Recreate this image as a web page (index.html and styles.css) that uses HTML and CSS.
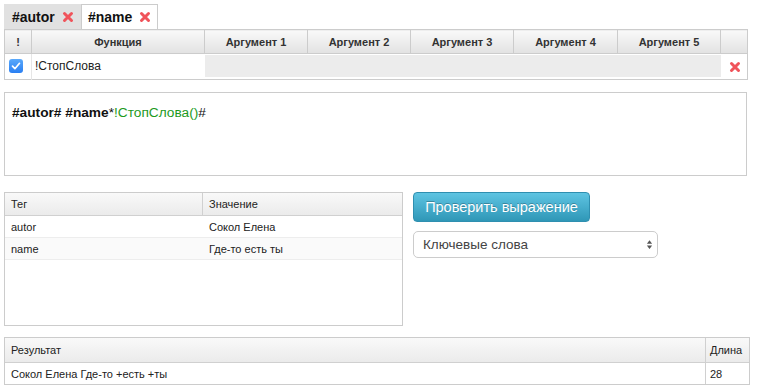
FILE: index.html
```html
<!DOCTYPE html>
<html lang="ru">
<head>
    <meta charset="UTF-8">
    <title>Проверка выражения</title>
    <link rel="stylesheet" href="styles.css">
</head>
<body>
    <!-- Tag tabs -->
    <div class="tabs">
        <div class="tab">#autor <span class="close"><svg viewBox="0 0 12 12"><path d="M2.5 2.5l7 7M9.5 2.5l-7 7"/></svg></span></div>
        <div class="tab active">#name <span class="close"><svg viewBox="0 0 12 12"><path d="M2.5 2.5l7 7M9.5 2.5l-7 7"/></svg></span></div>
    </div>

    <!-- Functions grid -->
    <table class="grid">
        <colgroup>
            <col style="width:27px"><col style="width:173px"><col style="width:103px"><col style="width:103px">
            <col style="width:103px"><col style="width:104px"><col style="width:103px"><col style="width:27px">
        </colgroup>
        <thead>
            <tr>
                <th>!</th><th>Функция</th><th>Аргумент 1</th><th>Аргумент 2</th>
                <th>Аргумент 3</th><th>Аргумент 4</th><th>Аргумент 5</th><th></th>
            </tr>
        </thead>
        <tbody>
            <tr>
                <td class="check-cell"><span class="checkbox"><svg viewBox="0 0 14 14"><path d="M3.5 7.2l2.4 2.5 4.6-5.4"/></svg></span></td>
                <td class="fn">!СтопСлова</td>
                <td colspan="5" class="args"><div class="args-fill"></div></td>
                <td class="del"><span class="close"><svg viewBox="0 0 12 12"><path d="M2.5 2.5l7 7M9.5 2.5l-7 7"/></svg></span></td>
            </tr>
        </tbody>
    </table>

    <!-- Expression -->
    <div class="editor"><b>#autor#</b> <b>#name</b>*<span class="green">!СтопСлова()</span>#</div>

    <div class="middle">
        <div class="tags">
            <div class="row head"><div class="c1">Тег</div><div class="c2">Значение</div></div>
            <div class="row"><div class="c1">autor</div><div class="c2">Сокол Елена</div></div>
            <div class="row alt"><div class="c1">name</div><div class="c2">Где-то есть ты</div></div>
        </div>
        <div class="actions">
            <button class="btn">Проверить выражение</button>
            <div class="select">
                <span>Ключевые слова</span>
                <svg class="arrows" viewBox="0 0 8 12"><path d="M4 1l3 4H1zM4 11l3-4H1z"/></svg>
            </div>
        </div>
    </div>

    <!-- Result -->
    <div class="result">
        <div class="row head"><div class="r1">Результат</div><div class="r2">Длина</div></div>
        <div class="row"><div class="r1">Сокол Елена Где-то +есть +ты</div><div class="r2">28</div></div>
    </div>
</body>
</html>
```

FILE: styles.css
```css
* {
    margin: 0;
    padding: 0;
    box-sizing: border-box;
}

body {
    font-family: 'Liberation Sans', Arial, sans-serif;
    color: #222;
    background: #fff;
    padding: 4px;
    width: 757px;
}

/* Tabs */
.tabs {
    display: flex;
    height: 25px;
}

.tab {
    display: flex;
    align-items: center;
    gap: 7px;
    height: 25px;
    padding: 0 8px 0 8px;
    font-size: 14px;
    font-weight: bold;
    color: #111;
    background: #e1e1e1;
    width: 77px;
}

.tab.active {
    background: #fff;
    border: 1px solid #ccc;
    border-bottom: none;
    width: 77px;
    padding-left: 6px;
}

.close {
    display: inline-block;
    width: 12px;
    height: 12px;
}

.close svg {
    width: 12px;
    height: 12px;
    display: block;
}

.close path {
    stroke: #f0545b;
    stroke-width: 3;
    stroke-linecap: round;
    fill: none;
}

/* Functions grid */
.grid {
    width: 743px;
    border-collapse: collapse;
    table-layout: fixed;
    border: 1px solid #ccc;
}

.grid th {
    height: 24px;
    font-size: 11px;
    font-weight: bold;
    color: #333;
    background: linear-gradient(#f9f9f9, #e2e2e2);
    border-left: 1px solid #ccc;
    border-bottom: 1px solid #ccc;
}

.grid th:first-child {
    border-left: none;
}

.grid td {
    height: 25px;
    font-size: 12px;
    padding: 1px 0 2px;
    vertical-align: middle;
}

.check-cell {
    text-align: center;
    border-right: 1px solid #e6e6e6;
}

.checkbox {
    display: inline-block;
    width: 14px;
    height: 14px;
    border-radius: 3px;
    background: linear-gradient(#5aa9fb, #2a7ff2);
    vertical-align: middle;
    margin-left: -4px;
}

.checkbox svg {
    display: block;
    width: 14px;
    height: 14px;
}

.checkbox path {
    stroke: #fff;
    stroke-width: 1.7;
    fill: none;
    stroke-linecap: round;
    stroke-linejoin: round;
}

.fn {
    padding-left: 3px !important;
    color: #222;
}

.args-fill {
    height: 22px;
    background: #ececec;
}

.del {
    text-align: center;
}

.del .close {
    vertical-align: middle;
    margin-left: 2px;
}

/* Expression editor */
.editor {
    margin-top: 12px;
    width: 743px;
    height: 84px;
    border: 1px solid #ccc;
    padding: 12px 7px;
    font-size: 13.7px;
    color: #111;
}

.green {
    color: #1d9a1d;
}

/* Middle block */
.middle {
    display: flex;
    margin-top: 16px;
}

.tags {
    width: 399px;
    height: 134px;
    border: 1px solid #ccc;
    font-size: 11px;
    color: #222;
}

.row {
    display: flex;
    height: 22px;
    align-items: center;
    border-bottom: 1px solid #ededed;
}

.row.alt {
    background: #fafafa;
}

.row.head {
    height: 23px;
    background: linear-gradient(#f9f9f9, #ebebeb);
    border-bottom: 1px solid #d0d0d0;
}

.c1 {
    width: 198px;
    padding-left: 6px;
    height: 100%;
    display: flex;
    align-items: center;
}

.head .c1 {
    border-right: 1px solid #d0d0d0;
}

.c2 {
    padding-left: 6px;
}

.actions {
    margin-left: 10px;
    display: flex;
    flex-direction: column;
    gap: 9px;
}

.btn {
    width: 177px;
    height: 30px;
    border: 1px solid #2f8fb0;
    border-radius: 4px;
    background: linear-gradient(#5ec4e2, #2f97b7);
    color: #fff;
    font-family: 'Liberation Sans', Arial, sans-serif;
    font-size: 14.5px;
    text-shadow: 0 -1px 0 rgba(0, 0, 0, 0.25);
}

.select {
    display: flex;
    align-items: center;
    justify-content: space-between;
    width: 245px;
    height: 27px;
    border: 1px solid #ccc;
    border-radius: 5px;
    padding: 0 4px 0 9px;
    font-size: 13.5px;
    color: #444;
}

.arrows {
    width: 7px;
    height: 11px;
}

.arrows path {
    fill: #555;
}

/* Result table */
.result {
    margin-top: 11px;
    width: 746px;
    border: 1px solid #ccc;
    font-size: 11px;
    color: #222;
}

.result .row {
    height: 21px;
}

.result .row.head {
    height: 25px;
}

.result .row:last-child {
    border-bottom: none;
}

.r1 {
    flex: 1;
    padding-left: 6px;
    height: 100%;
    display: flex;
    align-items: center;
    border-right: 1px solid #d0d0d0;
}

.r2 {
    width: 43px;
    padding-left: 4px;
}
```
